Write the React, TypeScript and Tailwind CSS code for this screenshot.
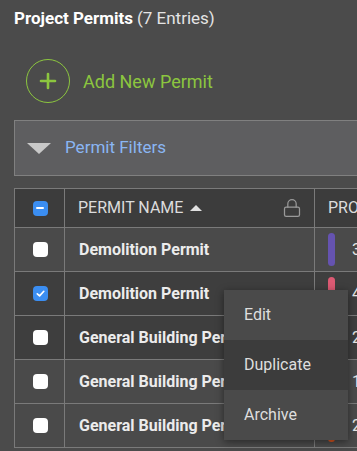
import React from 'react';
import { Lock, Plus } from 'lucide-react';

interface PermitRow {
  name: string;
  checked: boolean;
  dark: boolean;
  bar: string;
  count: string;
}

const rows: PermitRow[] = [
  { name: 'Demolition Permit', checked: false, dark: false, bar: 'bg-[#6553b0]', count: '3' },
  { name: 'Demolition Permit', checked: true, dark: true, bar: 'bg-[#dc5a73]', count: '4' },
  { name: 'General Building Permit', checked: false, dark: true, bar: 'bg-[#d9541e]', count: '2' },
  { name: 'General Building Permit', checked: false, dark: false, bar: 'bg-[#5aa05a]', count: '1' },
  { name: 'General Building Permit', checked: false, dark: false, bar: 'bg-[#d9541e]', count: '2' },
];

function Checkbox({ state }: { state: 'none' | 'checked' | 'partial' }) {
  if (state === 'none') {
    return <div className="w-[15px] h-[15px] rounded-[4px] bg-white" />;
  }
  return (
    <div className="w-[15px] h-[15px] rounded-[4px] bg-[#3b8ef2] flex items-center justify-center">
      {state === 'checked' ? (
        <svg width="11" height="11" viewBox="0 0 12 12" fill="none">
          <path d="M2.5 6.3 L5 8.6 L9.6 3.6" stroke="white" strokeWidth="1.8" strokeLinecap="round" strokeLinejoin="round" />
        </svg>
      ) : (
        <div className="w-[8px] h-[2px] rounded-full bg-white" />
      )}
    </div>
  );
}

export default function App(): JSX.Element {
  return (
    <div
      className="relative w-[357px] h-[451px] overflow-hidden bg-[#4b4b4b] text-[#e6e6e6]"
      style={{ fontFamily: 'Roboto, "Liberation Sans", sans-serif' }}
    >
      <div className="pl-[14px] pt-[8px] w-[500px]">
        {/* Title */}
        <div className="h-[21px] flex items-center text-[17px] leading-none text-white">
          <span className="font-bold">Project Permits</span>
          <span className="ml-[4px] text-[#e4e4e4]">(7 Entries)</span>
        </div>

        {/* Add new */}
        <div className="mt-[30px] ml-[12px] flex items-center h-[44px]">
          <div className="w-[44px] h-[44px] rounded-full border-[1.5px] border-[#8cc63f] flex items-center justify-center">
            <Plus size={24} strokeWidth={2.6} className="text-[#8cc63f]" />
          </div>
          <span className="ml-[13px] text-[18px] text-[#8cc63f]">Add New Permit</span>
        </div>

        {/* Filters */}
        <div className="mt-[17px] h-[56px] border border-[#808080] bg-[#5e5e60] flex items-center">
          <div className="ml-[12px] w-0 h-0 border-l-[12px] border-r-[12px] border-t-[11px] border-l-transparent border-r-transparent border-t-[#c8c8c8]" />
          <span className="ml-[14px] text-[17px] text-[#8ab6f3]">Permit Filters</span>
        </div>

        {/* Table */}
        <div className="mt-[12px] border-t border-l border-[#7a7a7a]">
          <div className="grid grid-cols-[50px_250px_120px] h-[39px] bg-[#3c3c3c] border-b border-[#7a7a7a]">
            <div className="flex items-center justify-center border-r border-[#7a7a7a] pl-[1px]">
              <Checkbox state="partial" />
            </div>
            <div className="flex items-center pl-[13px] pr-[12px] border-r border-[#7a7a7a] text-[16px] text-[#dcdcdc]">
              <span>PERMIT NAME</span>
              <div className="ml-[7px] w-0 h-0 border-l-[6px] border-r-[6px] border-b-[6px] border-l-transparent border-r-transparent border-b-[#e0e0e0]" />
              <Lock size={20} strokeWidth={1.5} className="ml-auto text-[#9a9a9a]" />
            </div>
            <div className="flex items-center pl-[13px] text-[16px] text-[#dcdcdc]">PROJECT</div>
          </div>
          {rows.map((r, i) => (
            <div
              key={i}
              className={`grid grid-cols-[50px_250px_120px] h-[44px] border-b border-[#7a7a7a] ${r.dark ? 'bg-[#3e3e3e]' : 'bg-[#4a4a4a]'}`}
            >
              <div className="flex items-center justify-center border-r border-[#7a7a7a] pl-[1px]">
                <Checkbox state={r.checked ? 'checked' : 'none'} />
              </div>
              <div className="flex items-center pl-[14px] border-r border-[#7a7a7a] text-[16px] font-bold text-[#ececec] whitespace-nowrap overflow-hidden">
                {r.name}
              </div>
              <div className="flex items-center pl-[13px]">
                <div className={`w-[7px] h-[33px] rounded-full ${r.bar}`} />
                <span className="ml-[17px] text-[16px] text-[#e6e6e6]">{r.count}</span>
              </div>
            </div>
          ))}
        </div>
      </div>

      {/* Context menu */}
      <div className="absolute left-[224px] top-[290px] w-[124px] bg-[#4a4a4a] shadow-[0_2px_8px_rgba(0,0,0,0.45)] text-[16px] text-[#dedede]">
        <div className="h-[50px] flex items-center pl-[20px]">Edit</div>
        <div className="h-[50px] flex items-center pl-[20px] bg-[#3c3c3c]">Duplicate</div>
        <div className="h-[50px] flex items-center pl-[20px]">Archive</div>
      </div>
    </div>
  );
}
